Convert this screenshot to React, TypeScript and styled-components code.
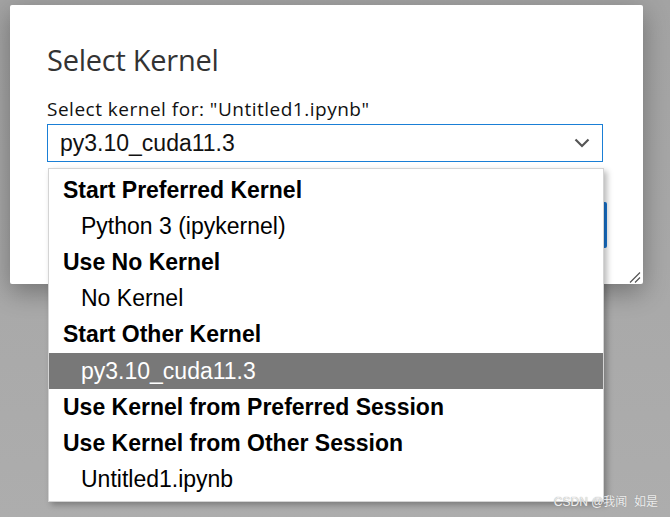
import styled, { createGlobalStyle } from "styled-components";

const GlobalStyle = createGlobalStyle`
  html, body {
    margin: 0;
    padding: 0;
    width: 100%;
    height: 100%;
    overflow: hidden;
  }
  body {
    background: #a6a6a6;
    font-family: "Open Sans", "Noto Sans", sans-serif;
  }
`;

const Page = styled.div`
  position: relative;
  width: 670px;
  height: 517px;
  padding: 5px 0 0 10px;
  box-sizing: border-box;
  background: linear-gradient(to bottom, #a3a3a3, #adadad);
`;

const Dialog = styled.div`
  position: relative;
  width: 633px;
  height: 279px;
  box-sizing: border-box;
  padding: 35px 36px 0 37px;
  background: #ffffff;
  border-radius: 2px;
  box-shadow: 0 8px 26px rgba(0, 0, 0, 0.32);
  display: flex;
  flex-direction: column;
`;

const Title = styled.h2`
  margin: 0;
  font-family: "Open Sans", "Noto Sans", sans-serif;
  font-weight: 400;
  font-size: 29px;
  line-height: 40px;
  letter-spacing: -0.25px;
  color: #333333;
`;

const Label = styled.label`
  margin-top: 18px;
  font-family: "Open Sans", "Noto Sans", sans-serif;
  font-size: 19px;
  line-height: 22px;
  letter-spacing: 0.5px;
  color: #111111;
`;

const SelectBox = styled.div`
  margin-top: 4px;
  width: 556px;
  height: 38px;
  box-sizing: border-box;
  border: 1px solid #1a7fd6;
  display: flex;
  align-items: center;
  justify-content: space-between;
  padding: 0 12px 0 12px;
  font-family: "Liberation Sans", Arial, sans-serif;
  font-size: 23px;
  color: #111111;
`;

const Footer = styled.div`
  margin-top: 40px;
  display: flex;
  justify-content: flex-end;
`;

const PrimaryButton = styled.button`
  width: 120px;
  height: 46px;
  border: none;
  border-radius: 2px;
  background: #1976d2;
  color: #ffffff;
  font-family: "Open Sans", sans-serif;
  font-size: 16px;
`;

const Grip = styled.svg`
  position: absolute;
  right: 2px;
  bottom: 1px;
`;

const Dropdown = styled.ul`
  position: absolute;
  left: 48px;
  top: 168px;
  width: 556px;
  margin: 0;
  padding: 3px 0 3px;
  list-style: none;
  box-sizing: border-box;
  background: #ffffff;
  border: 1px solid #d4d4d4;
  box-shadow: 3px 3px 6px rgba(0, 0, 0, 0.28);
  font-family: "Liberation Sans", Arial, sans-serif;
  font-size: 23px;
  color: #000000;
`;

const Row = styled.li<{ $group?: boolean; $active?: boolean }>`
  height: 36.2px;
  display: flex;
  align-items: center;
  padding-left: ${(p) => (p.$group ? "14px" : "32px")};
  font-weight: ${(p) => (p.$group ? 700 : 400)};
  background: ${(p) => (p.$active ? "#787878" : "transparent")};
  color: ${(p) => (p.$active ? "#ffffff" : "#000000")};
`;

const Watermark = styled.div`
  position: absolute;
  right: 12px;
  bottom: 8px;
  font-family: "Liberation Sans", "Noto Sans CJK SC", sans-serif;
  font-size: 12px;
  color: #eeeeee;
  text-shadow: 0 0 1px #8a8a8a;
`;

function Chevron() {
  return (
    <svg width="16" height="10" viewBox="0 0 16 10">
      <path
        d="M1.5 1.5 L8 8 L14.5 1.5"
        fill="none"
        stroke="#555555"
        strokeWidth="2.2"
      />
    </svg>
  );
}

const rows = [
  { text: "Start Preferred Kernel", group: true },
  { text: "Python 3 (ipykernel)" },
  { text: "Use No Kernel", group: true },
  { text: "No Kernel" },
  { text: "Start Other Kernel", group: true },
  { text: "py3.10_cuda11.3", active: true },
  { text: "Use Kernel from Preferred Session", group: true },
  { text: "Use Kernel from Other Session", group: true },
  { text: "Untitled1.ipynb" },
];

export default function App() {
  return (
    <>
      <GlobalStyle />
      <Page>
        <Dialog>
          <Title>Select Kernel</Title>
          <Label>Select kernel for: "Untitled1.ipynb"</Label>
          <SelectBox>
            <span>py3.10_cuda11.3</span>
            <Chevron />
          </SelectBox>
          <Footer>
            <PrimaryButton>Select</PrimaryButton>
          </Footer>
          <Grip width="12" height="11" viewBox="0 0 12 11">
            <path d="M1 10.5 L11 0.5 M6 10.5 L11 5.5" stroke="#555555" strokeWidth="1.2" />
          </Grip>
        </Dialog>
        <Dropdown>
          {rows.map((r) => (
            <Row key={r.text} $group={r.group} $active={r.active}>
              {r.text}
            </Row>
          ))}
        </Dropdown>
        <Watermark>CSDN @我闻&nbsp;&nbsp;如是</Watermark>
      </Page>
    </>
  );
}
